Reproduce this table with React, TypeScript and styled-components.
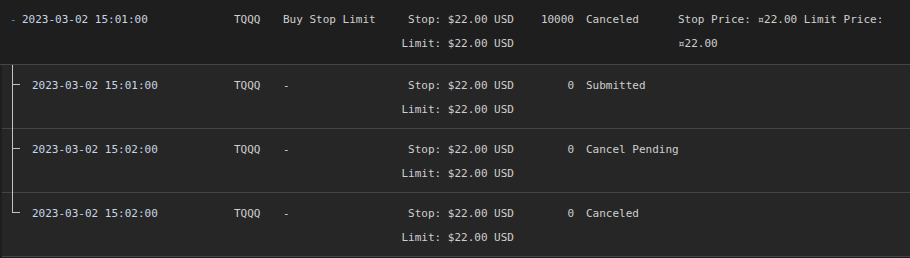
import React from 'react';
import styled, { createGlobalStyle } from 'styled-components';

interface OrderLine {
    time: string;
    symbol: string;
    type: string;
    stop: string;
    limit: string;
    quantity: string;
    status: string;
    description?: string;
}

const parent: OrderLine = {
    time: '2023-03-02 15:01:00',
    symbol: 'TQQQ',
    type: 'Buy Stop Limit',
    stop: 'Stop: $22.00 USD',
    limit: 'Limit: $22.00 USD',
    quantity: '10000',
    status: 'Canceled',
    description: 'Stop Price: ¤22.00 Limit Price: ¤22.00',
};

const events: OrderLine[] = [
    { time: '2023-03-02 15:01:00', symbol: 'TQQQ', type: '-', stop: 'Stop: $22.00 USD', limit: 'Limit: $22.00 USD', quantity: '0', status: 'Submitted' },
    { time: '2023-03-02 15:02:00', symbol: 'TQQQ', type: '-', stop: 'Stop: $22.00 USD', limit: 'Limit: $22.00 USD', quantity: '0', status: 'Cancel Pending' },
    { time: '2023-03-02 15:02:00', symbol: 'TQQQ', type: '-', stop: 'Stop: $22.00 USD', limit: 'Limit: $22.00 USD', quantity: '0', status: 'Canceled' },
];

const App = (): JSX.Element => {
    const renderCells = (order: OrderLine) => {
        return (
            <>
                <Cell>{order.symbol}</Cell>
                <Cell>{order.type}</Cell>
                <NumberCell>
                    <div>{order.stop}</div>
                    <div>{order.limit}</div>
                </NumberCell>
                <NumberCell>{order.quantity}</NumberCell>
                <StatusCell>{order.status}</StatusCell>
                <Cell>{order.description}</Cell>
            </>
        );
    };

    return (
        <>
            <GlobalStyle />
            <Table>
                <Row>
                    <FirstCell>
                        <Toggle>-</Toggle>
                        <Time>{parent.time}</Time>
                    </FirstCell>
                    {renderCells(parent)}
                </Row>

                <Children>
                    {events.map((event, index) => (
                        <ChildRow key={`${event.status}-${index}`}>
                            <BranchCell last={index === events.length - 1}>
                                <Time>{event.time}</Time>
                            </BranchCell>
                            {renderCells(event)}
                        </ChildRow>
                    ))}
                </Children>
            </Table>
        </>
    );
};

const GlobalStyle = createGlobalStyle`
    html, body {
        margin: 0;
        padding: 0;
        background: #1e1e1e;
    }
`;

const Table = styled.div`
    width: 910px;

    font-family: 'DejaVu Sans Mono', 'Liberation Mono', monospace;
    font-size: 11px;
    line-height: 24px;
    color: #cfcfcf;
`;

const Row = styled.div`
    display: grid;
    grid-template-columns: 234px 49px 107px 124px 60px 104px 1fr;

    box-sizing: border-box;
    height: 65px;
    padding-top: 8px;

    background: #1e1e1e;
    border-bottom: 1px solid #454545;
`;

const Children = styled.div`
    margin-left: 2px;
`;

const ChildRow = styled(Row)`
    grid-template-columns: 232px 49px 107px 124px 60px 104px 1fr;
    height: 64px;
    padding-top: 9px;

    background: #262626;
`;

const Cell = styled.div`
    white-space: pre-wrap;
`;

const FirstCell = styled.div`
    display: flex;
    padding-left: 10px;
`;

const BranchCell = styled.div<{ last: boolean }>`
    position: relative;
    padding-left: 30px;

    &::before {
        content: '';
        position: absolute;
        left: 10px;
        top: -9px;
        width: 1px;
        height: ${(p) => (p.last ? '20px' : '65px')};
        background: #c4c4c4;
    }

    &::after {
        content: '';
        position: absolute;
        left: 10px;
        top: 10px;
        width: 8px;
        height: 1px;
        background: #c4c4c4;
    }
`;

const Toggle = styled.span`
    width: 12px;
    color: #3e95e0;
`;

const Time = styled.span`
    color: #c6d6e4;
`;

const NumberCell = styled.div`
    text-align: right;
`;

const StatusCell = styled.div`
    padding-left: 12px;
    white-space: nowrap;
`;

export default App;
